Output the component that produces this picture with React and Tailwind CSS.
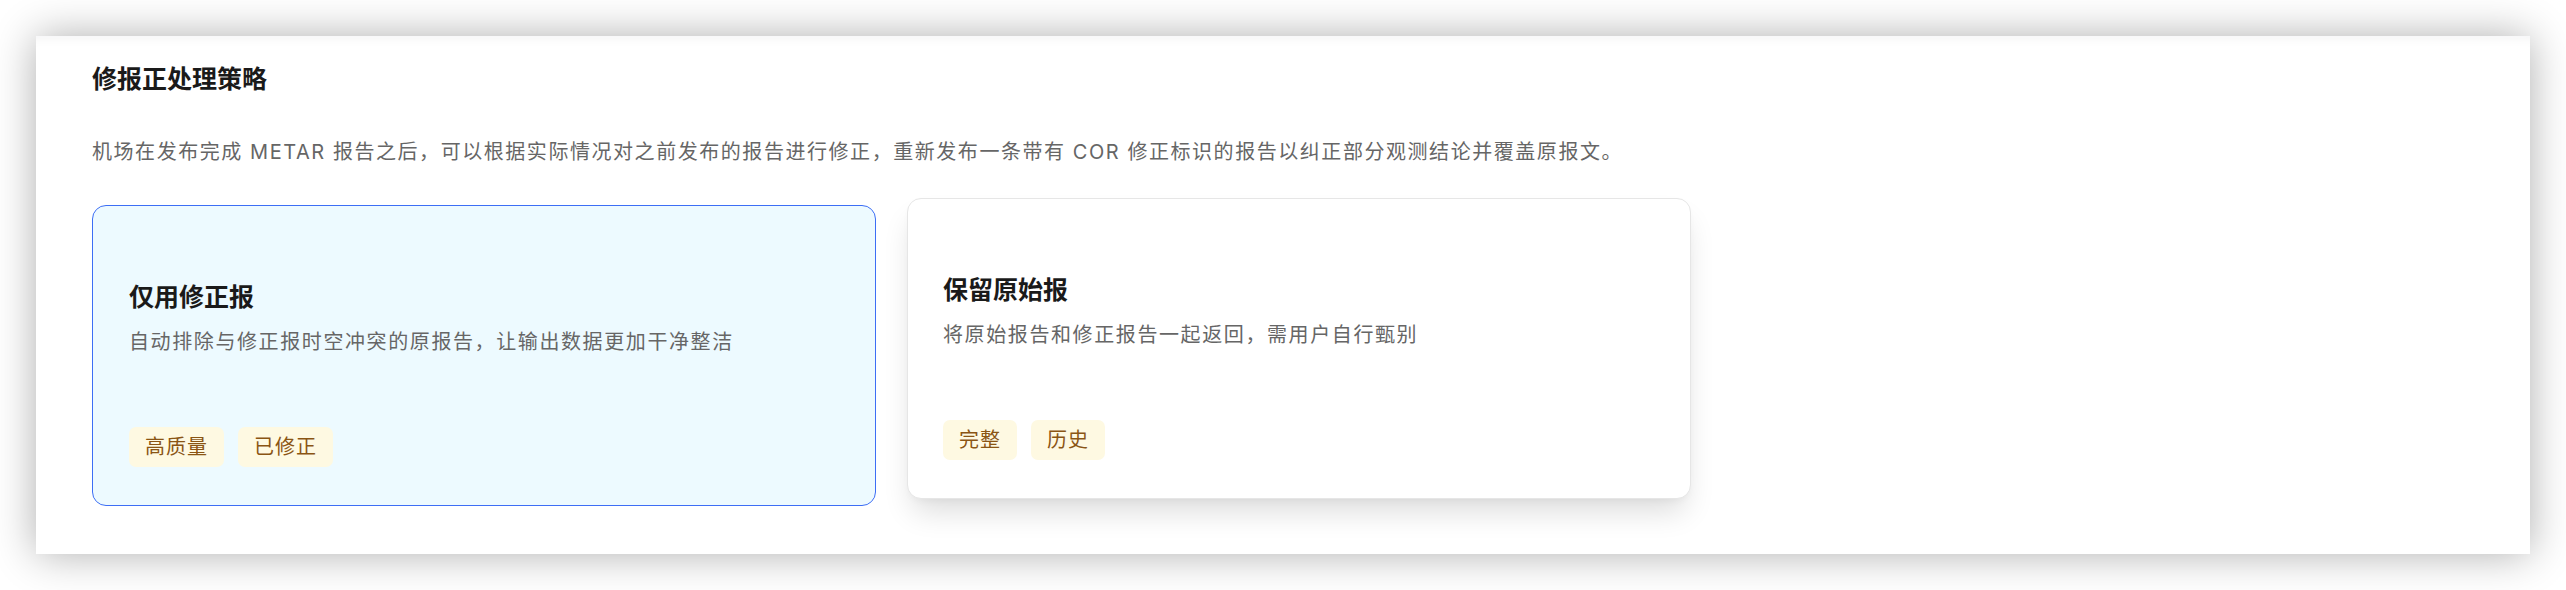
import React from "react";

function Badge({ children }) {
  return (
    <span className="inline-flex h-[40px] items-center rounded-[7px] bg-[#fef9e2] px-4 text-[20px] leading-[28px] tracking-[1px] text-[#8a5514]">
      {children}
    </span>
  );
}

function Card({ title, desc, tags, active }) {
  return (
    <div
      className={
        active
          ? "flex h-[301px] w-[784px] flex-col rounded-[14px] border border-[#3d6ef5] bg-[#edfaff] pb-[38px] pl-[36px] pr-9 pt-[73px]"
          : "flex h-[301px] w-[784px] -translate-y-[7px] flex-col rounded-[14px] border border-[#e6e6e6] bg-white pb-[38px] pl-[35px] pr-9 pt-[73px] shadow-[0_18px_30px_-6px_rgba(0,0,0,0.14),0_4px_10px_-4px_rgba(0,0,0,0.06)]"
      }
    >
      <div className="text-[25px] font-bold leading-[36px] text-[#1a1a1a]">{title}</div>
      <div className="mt-[13px] text-[20px] leading-[28px] tracking-[1.6px] text-[#666666]">{desc}</div>
      <div className="mt-auto flex gap-[14px]">
        {tags.map((t) => (
          <Badge key={t}>{t}</Badge>
        ))}
      </div>
    </div>
  );
}

export default function App() {
  return (
    <div
      className="min-h-[590px] w-full bg-white px-[36px] pb-[36px] pt-[36px]"
      style={{ fontFamily: 'Inter, "Noto Sans CJK SC", "Noto Sans", sans-serif' }}
    >
      <div className="h-[518px] bg-white pl-14 pr-14 pt-[25px] shadow-[0_0_40px_rgba(0,0,0,0.32),inset_0_12px_12px_-10px_rgba(0,0,30,0.05)]">
        <h2 className="text-[25px] font-bold leading-[36px] text-[#1a1a1a]">修报正处理策略</h2>
        <p className="mt-[41px] text-[20px] leading-[28px] tracking-[1.55px] text-[#666666]">
          机场在发布完成 METAR 报告之后，可以根据实际情况对之前发布的报告进行修正，重新发布一条带有 COR 修正标识的报告以纠正部分观测结论并覆盖原报文。
        </p>
        <div className="mt-[39px] flex gap-[31px]">
          <Card
            active
            title="仅用修正报"
            desc="自动排除与修正报时空冲突的原报告，让输出数据更加干净整洁"
            tags={["高质量", "已修正"]}
          />
          <Card
            title="保留原始报"
            desc="将原始报告和修正报告一起返回，需用户自行甄别"
            tags={["完整", "历史"]}
          />
        </div>
      </div>
    </div>
  );
}
